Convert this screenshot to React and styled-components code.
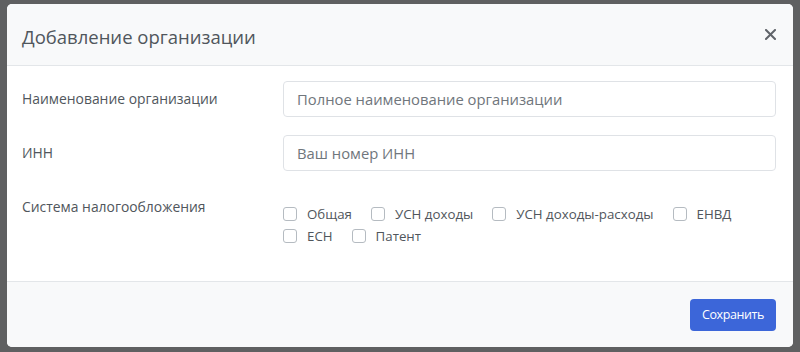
import React from "react";
import styled, { createGlobalStyle } from "styled-components";

const GlobalStyle = createGlobalStyle`
  html, body {
    margin: 0;
    padding: 0;
    background: #5f6061;
  }
  * {
    box-sizing: border-box;
  }
`;

const taxOptions = [
  "Общая",
  "УСН доходы",
  "УСН доходы-расходы",
  "ЕНВД",
  "ЕСН",
  "Патент",
];

const App = () => {
  return (
    <>
      <GlobalStyle />
      <Backdrop>
        <Modal>
          <Header>
            <Title>Добавление организации</Title>
            <CloseButton aria-label="Закрыть">
              <svg width="11" height="11" viewBox="0 0 11 11">
                <path
                  d="M1 1L10 10M10 1L1 10"
                  stroke="#606469"
                  strokeWidth="2"
                  strokeLinecap="square"
                />
              </svg>
            </CloseButton>
          </Header>
          <Body>
            <FormRow>
              <Label>Наименование организации</Label>
              <Input placeholder="Полное наименование организации" />
            </FormRow>
            <FormRow>
              <Label>ИНН</Label>
              <Input placeholder="Ваш номер ИНН" />
            </FormRow>
            <FormRow>
              <Label>Система налогообложения</Label>
              <CheckGroup>
                {taxOptions.map((opt) => (
                  <CheckItem key={opt}>
                    <CheckBox type="checkbox" />
                    <span>{opt}</span>
                  </CheckItem>
                ))}
              </CheckGroup>
            </FormRow>
          </Body>
          <Footer>
            <SaveButton>Сохранить</SaveButton>
          </Footer>
        </Modal>
      </Backdrop>
    </>
  );
};

const Backdrop = styled.div`
  width: 800px;
  height: 352px;
  padding: 4px 7px 0 7px;
`;

const Modal = styled.div`
  width: 786px;
  height: 343px;
  background: #fff;
  border-radius: 5px;
  overflow: hidden;
  display: flex;
  flex-direction: column;
  font-family: "Open Sans", "Liberation Sans", sans-serif;
`;

const Header = styled.div`
  height: 62px;
  flex: none;
  display: flex;
  align-items: center;
  justify-content: space-between;
  padding: 0 17px 0 15px;
  background: #f8f9fa;
  border-bottom: 1px solid #e3e6e9;
`;

const Title = styled.h5`
  margin: 3px 0 0;
  font-size: 18.5px;
  font-weight: 400;
  color: #50565c;
`;

const CloseButton = styled.button`
  border: 0;
  background: transparent;
  padding: 0;
  margin-left: auto;
  display: flex;
  cursor: pointer;
`;

const Body = styled.div`
  flex: 1;
  padding: 15px 17px 0 15px;
  display: flex;
  flex-direction: column;
  gap: 18px;
`;

const FormRow = styled.div`
  display: grid;
  grid-template-columns: 261px 1fr;
  align-items: start;
`;

const Label = styled.label`
  padding-top: 8px;
  font-size: 13.9px;
  line-height: 20px;
  color: #50565c;
`;

const Input = styled.input`
  height: 36px;
  width: 100%;
  border: 1px solid #dfe2e6;
  border-radius: 4px;
  padding: 0 13px;
  font-family: inherit;
  font-size: 14.8px;
  color: #495057;
  outline: none;
  &::placeholder {
    color: #70767c;
  }
`;

const CheckGroup = styled.div`
  display: flex;
  flex-wrap: wrap;
  padding-top: 14px;
`;

const CheckItem = styled.label`
  display: flex;
  align-items: center;
  height: 22px;
  margin-right: 19px;
  font-size: 13.3px;
  color: #50565c;
  span {
    margin-left: 10px;
  }
`;

const CheckBox = styled.input`
  appearance: none;
  margin: 0;
  width: 14px;
  height: 14px;
  border: 1px solid #b5bbc1;
  border-radius: 3px;
  background: #fff;
`;

const Footer = styled.div`
  height: 66px;
  flex: none;
  display: flex;
  align-items: center;
  justify-content: flex-end;
  padding: 0 17px;
  background: #f8f9fa;
  border-top: 1px solid #e3e6e9;
`;

const SaveButton = styled.button`
  height: 32px;
  padding: 0 12px;
  border: 0;
  border-radius: 4px;
  background: #3c66d9;
  color: #fff;
  font-family: inherit;
  font-size: 12.5px;
  letter-spacing: -0.4px;
  cursor: pointer;
`;

export default App;
